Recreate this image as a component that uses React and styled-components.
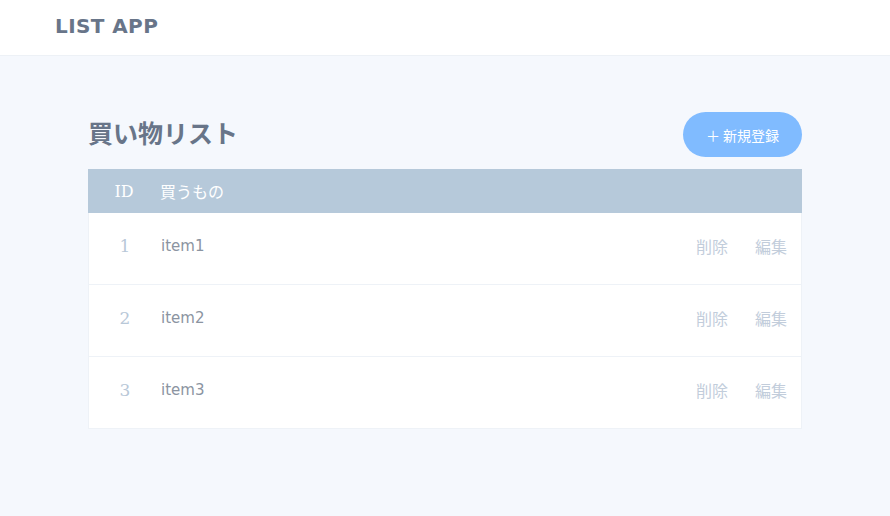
import React from 'react'
import styled, { createGlobalStyle } from 'styled-components'

const items = [
  { id: 1, name: 'item1' },
  { id: 2, name: 'item2' },
  { id: 3, name: 'item3' },
]

const App = () => {
  return (
    <>
      <GlobalStyle />
      <Page>
        <Header>
          <Logo>LIST APP</Logo>
        </Header>
        <Main>
          <TitleRow>
            <Title>買い物リスト</Title>
            <AddButton>＋ 新規登録</AddButton>
          </TitleRow>
          <Table>
            <HeadRow>
              <IdCell head>ID</IdCell>
              <NameCell head>買うもの</NameCell>
            </HeadRow>
            {items.map((item) => (
              <Row key={item.id}>
                <IdCell>{item.id}</IdCell>
                <NameCell>{item.name}</NameCell>
                <Actions>
                  <ActionLink>削除</ActionLink>
                  <ActionLink>編集</ActionLink>
                </Actions>
              </Row>
            ))}
          </Table>
        </Main>
      </Page>
    </>
  )
}

const GlobalStyle = createGlobalStyle`
body {
  margin: 0;
  background: #f5f8fd;
  font-family: "DejaVu Sans", "Noto Sans CJK JP", sans-serif;
}
`

const Page = styled.div`
min-height: 516px;
background: #f5f8fd;
`

const Header = styled.header`
height: 56px;
background: #ffffff;
border-bottom: 1px solid #edf1f6;
display: flex;
align-items: center;
padding-left: 55px;
padding-bottom: 4px;
box-sizing: border-box;
`

const Logo = styled.div`
font-family: "DejaVu Sans", sans-serif;
font-size: 20px;
font-weight: 700;
color: #687589;
letter-spacing: 0.4px;
`

const Main = styled.main`
width: 714px;
margin: 0 auto;
padding-top: 56px;
`

const TitleRow = styled.div`
display: flex;
justify-content: space-between;
align-items: center;
margin-bottom: 12px;
`

const Title = styled.h1`
margin: -5px 0 0;
font-family: "Noto Sans CJK JP", sans-serif;
font-size: 25px;
font-weight: 700;
color: #687589;
`

const AddButton = styled.button`
height: 45px;
width: 119px;
border: none;
border-radius: 23px;
background: #80bbff;
color: #ffffff;
font-family: "Noto Sans CJK JP", sans-serif;
font-size: 14px;
cursor: pointer;
`

const Table = styled.div`
background: #ffffff;
border: 1px solid #eef2f7;
border-top: none;
`

const HeadRow = styled.div`
display: flex;
align-items: center;
height: 44px;
background: #b6c9da;
margin: 0 -1px;
color: #ffffff;
`

const Row = styled.div`
display: flex;
align-items: center;
height: 72px;
padding-bottom: 6px;
box-sizing: border-box;
border-bottom: 1px solid #eef2f7;
&:last-child {
  border-bottom: none;
  height: 71px;
}
`

const IdCell = styled.div`
width: 72px;
text-align: center;
font-family: "DejaVu Serif", serif;
font-size: ${(p) => (p.head ? '16px' : '17px')};
color: ${(p) => (p.head ? '#ffffff' : '#b9c8d8')};
`

const NameCell = styled.div`
flex: 1;
font-family: ${(p) => (p.head ? '"Noto Sans CJK JP", sans-serif' : '"DejaVu Sans", sans-serif')};
font-size: ${(p) => (p.head ? '16px' : '15px')};
color: ${(p) => (p.head ? '#ffffff' : '#8b94a1')};
`

const Actions = styled.div`
display: flex;
gap: 27px;
padding-right: 14px;
`

const ActionLink = styled.span`
font-family: "Noto Sans CJK JP", sans-serif;
font-size: 16px;
color: #c2cddb;
cursor: pointer;
`

export default App
